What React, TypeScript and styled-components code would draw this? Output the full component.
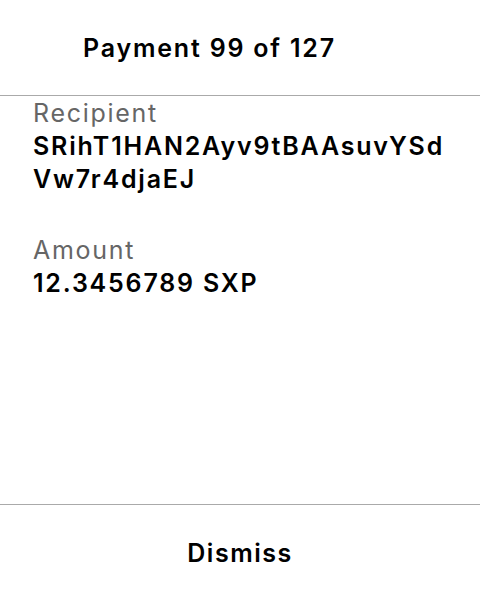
import styled, { createGlobalStyle } from 'styled-components';

const GlobalStyle = createGlobalStyle`
  html, body {
    margin: 0;
    padding: 0;
    background: #ffffff;
  }
  body {
    font-family: Inter, "Noto Sans", sans-serif;
    color: #000000;
  }
`;

const Screen = styled.div`
  width: 100%;
  height: 100vh;
  display: flex;
  flex-direction: column;
  background-color: #ffffff;
`;

const Header = styled.header`
  height: 95px;
  flex-shrink: 0;
  display: flex;
  align-items: center;
  padding-left: 83px;
  border-bottom: 1px solid #aaaaaa;
`;

const Title = styled.h1`
  margin: 0;
  font-size: 25px;
  font-weight: 600;
  line-height: 30px;
  letter-spacing: 1.8px;
`;

const Body = styled.main`
  flex: 1;
  display: flex;
  flex-direction: column;
  gap: 38px;
  padding: 1px 27px 0 33px;
`;

const Field = styled.div`
  display: flex;
  flex-direction: column;
`;

const Label = styled.span`
  font-size: 25px;
  font-weight: 400;
  line-height: 33px;
  letter-spacing: 1.7px;
  color: #666666;
`;

const Value = styled.span`
  font-size: 25px;
  font-weight: 600;
  line-height: 33px;
  letter-spacing: 1.8px;
  color: #000000;
  word-break: break-all;
`;

const Footer = styled.footer`
  height: 95px;
  flex-shrink: 0;
  display: flex;
  align-items: center;
  justify-content: center;
  border-top: 1px solid #aaaaaa;
`;

const DismissButton = styled.button`
  border: none;
  background: none;
  padding: 0;
  font-family: Inter, "Noto Sans", sans-serif;
  font-size: 25px;
  font-weight: 600;
  line-height: 30px;
  letter-spacing: 1.5px;
  color: #000000;
  cursor: pointer;
`;

const fields = [
  { label: 'Recipient', value: 'SRihT1HAN2Ayv9tBAAsuvYSdVw7r4djaEJ' },
  { label: 'Amount', value: '12.3456789 SXP' },
];

const App = () => {
  return (
    <>
      <GlobalStyle />
      <Screen>
        <Header>
          <Title>Payment 99 of 127</Title>
        </Header>
        <Body>
          {fields.map((f) => (
            <Field key={f.label}>
              <Label>{f.label}</Label>
              <Value>{f.value}</Value>
            </Field>
          ))}
        </Body>
        <Footer>
          <DismissButton>Dismiss</DismissButton>
        </Footer>
      </Screen>
    </>
  );
};

export default App;
